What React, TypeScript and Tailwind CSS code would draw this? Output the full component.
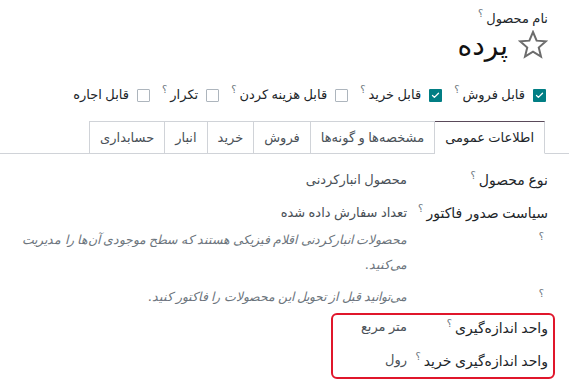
import { Check } from "lucide-react"

const font = "font-['Noto_Sans','DejaVu_Sans',sans-serif]"

function Q() {
  return <sup className="text-[10px] text-[#6c757d] mr-[3px] top-[-0.6em]">؟</sup>
}

function Box({ checked }: { checked?: boolean }) {
  return checked ? (
    <span className="w-[13px] h-[13px] bg-[#017e84] rounded-[1px] flex items-center justify-center shrink-0">
      <Check size={9} strokeWidth={3.5} className="text-white" />
    </span>
  ) : (
    <span className="w-[13px] h-[13px] border border-[#adb5bd] bg-white rounded-[1px] shrink-0" />
  )
}

const flags = [
  { label: "قابل فروش", checked: true, help: true },
  { label: "قابل خرید", checked: true, help: true },
  { label: "قابل هزینه کردن", checked: false, help: true },
  { label: "تکرار", checked: false, help: true },
  { label: "قابل اجاره", checked: false, help: false },
]

const tabs = ["اطلاعات عمومی", "مشخصه‌ها و گونه‌ها", "فروش", "خرید", "انبار", "حسابداری"]

function Field({ label, value, h = "h-[33px]" }: { label: string; value: string; h?: string }) {
  return (
    <div className={`flex items-center ${h}`}>
      <div className="w-[141px] shrink-0 text-[14px] text-[#212529] font-medium">
        {label}
        <Q />
      </div>
      <div className="text-[13px] text-[#495057]">{value}</div>
    </div>
  )
}

export default function App() {
  return (
    <div dir="rtl" className={`w-[569px] h-[392px] bg-white overflow-hidden ${font}`}>
      {/* Title */}
      <div className="pr-[21px] pt-[8px]">
        <div className="text-[13px] text-[#212529] leading-[20px]">
          نام محصول
          <Q />
        </div>
        <div className="flex items-center gap-[10px] mt-[0px] h-[32px]">
          <svg width="30" height="29" viewBox="0 0 24 23" className="shrink-0">
            <polygon
              points="12,1.5 14.9,8.4 22.3,9 16.6,13.9 18.4,21.2 12,17.3 5.6,21.2 7.4,13.9 1.7,9 9.1,8.4"
              fill="none"
              stroke="#6c6c6c"
              strokeWidth="1.6"
              strokeLinejoin="miter"
            />
          </svg>
          <h1 className="text-[28px] leading-none text-[#111] font-normal">پرده</h1>
        </div>
      </div>

      {/* Flags */}
      <div className="flex items-center gap-[12px] pr-[23px] mt-[22px] h-[26px]">
        {flags.map((f) => (
          <div key={f.label} className="flex items-center gap-[8px]">
            <Box checked={f.checked} />
            <span className="text-[13px] text-[#212529]">
              {f.label}
              {f.help && <Q />}
            </span>
          </div>
        ))}
      </div>

      {/* Tabs */}
      <div className="mt-[13px] border-b border-[#d0d3d8] flex pr-[24px] h-[33px]">
        {tabs.map((t, i) => (
          <div
            key={t}
            className={
              i === 0
                ? "px-[10px] -mb-px bg-white border border-[#d0d3d8] border-t-[#5a4a5a] border-b-white flex items-center text-[13px] text-[#212529]"
                : "px-[10px] -mb-px border border-[#d0d3d8] -mr-px flex items-center text-[13px] text-[#495057]"
            }
          >
            {t}
          </div>
        ))}
      </div>

      {/* General info */}
      <div className="pr-[21px] pl-[10px] pt-[9px]">
        <Field label="نوع محصول" value="محصول انبارکردنی" />
        <Field label="سیاست صدور فاکتور" value="تعداد سفارش داده شده" />

        <div className="flex -mt-[2px]">
          <div className="w-[141px] shrink-0 text-[10px] text-[#6c757d] pr-[4px] pt-[2px]">؟</div>
          <p className="text-[12.5px] italic text-[#6c757d] leading-[25px]">
            محصولات انبارکردنی اقلام فیزیکی هستند که سطح موجودی آن‌ها را مدیریت می‌کنید.
          </p>
        </div>
        <div className="flex mt-[7px]">
          <div className="w-[141px] shrink-0 text-[10px] text-[#6c757d] pr-[4px] pt-[2px]">؟</div>
          <p className="text-[12.5px] italic text-[#6c757d] leading-[25px]">
            می‌توانید قبل از تحویل این محصولات را فاکتور کنید.
          </p>
        </div>

        <div className="mt-[4px] -mr-[7px] w-[224px] border-2 border-[#e0162b] rounded-[6px] pr-[5px] pb-[5px] flex flex-col gap-[9px]">
          <Field label="واحد اندازه‌گیری" value="متر مربع" h="h-[24px]" />
          <Field label="واحد اندازه‌گیری خرید" value="رول" h="h-[24px]" />
        </div>
      </div>
    </div>
  )
}
